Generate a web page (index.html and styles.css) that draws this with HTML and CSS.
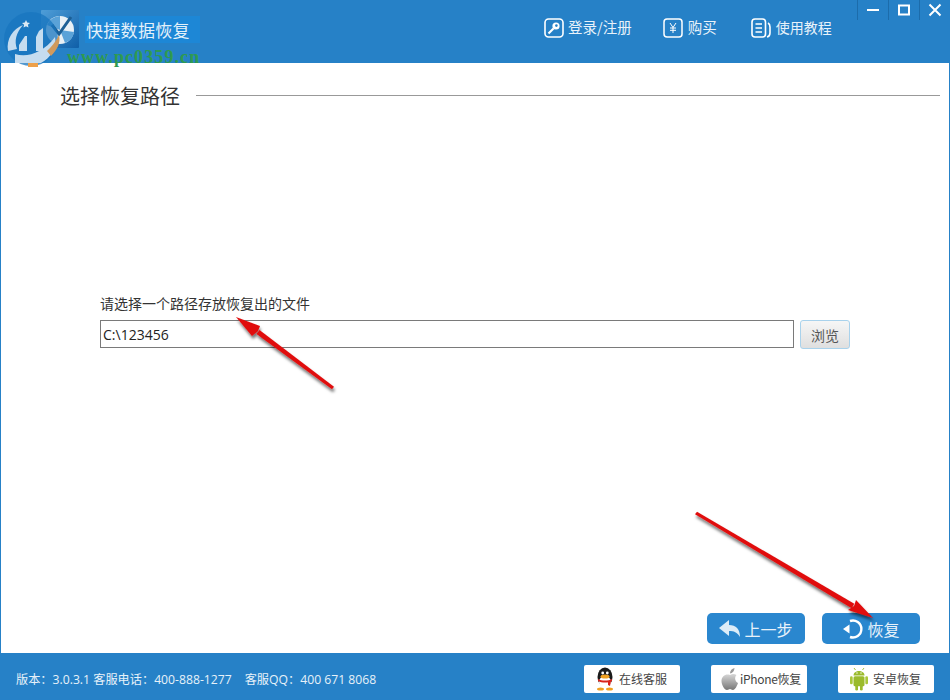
FILE: index.html
```html
<!DOCTYPE html>
<html lang="zh-CN">
<head>
    <meta charset="UTF-8">
    <title>快捷数据恢复</title>
    <link rel="stylesheet" href="styles.css">
</head>
<body>
<div class="app">

    <header class="topbar">
        <div class="brand">
            <svg class="brand-icon" width="38" height="38" viewBox="0 0 38 38">
                <defs>
                    <linearGradient id="brandBg" x1="0" y1="0" x2="1" y2="1">
                        <stop offset="0" stop-color="#4f9ed8"/>
                        <stop offset="1" stop-color="#0f5fa8"/>
                    </linearGradient>
                </defs>
                <rect width="38" height="38" rx="1" fill="url(#brandBg)"/>
                <circle cx="19" cy="20" r="14" fill="#e8f0f6"/>
                <path d="M19 20 L19 6 A14 14 0 0 0 6 15 Z" fill="#5aa2d8"/>
                <path d="M19 20 L33 22 A14 14 0 0 1 24 33 Z" fill="#5aa2d8"/>
                <path d="M11 15 L18 24 L30 7" fill="none" stroke="#1c5f96" stroke-width="3"/>
            </svg>
            <span class="brand-name">快捷数据恢复</span>
        </div>
        <nav class="topnav">
            <a class="topnav-item topnav-login">
                <svg width="20" height="20" viewBox="0 0 20 20">
                    <rect x="1" y="1" width="18" height="18" rx="3.5" fill="none" stroke="#fff" stroke-width="1.6"/>
                    <circle cx="12" cy="8" r="3.6" fill="#fff"/>
                    <circle cx="12.4" cy="7.6" r="1.3" fill="#2681c7"/>
                    <path d="M9.5 10.5 L4.5 15.5" stroke="#fff" stroke-width="2.2"/>
                </svg>
                <span>登录/注册</span>
            </a>
            <a class="topnav-item topnav-buy">
                <svg width="20" height="20" viewBox="0 0 20 20">
                    <rect x="1" y="1" width="18" height="18" rx="3" fill="none" stroke="#fff" stroke-width="1.5"/>
                    <path d="M7 5 L10 9.5 L13 5 M10 9.5 V15 M7 10 H13 M7 12.3 H13" fill="none" stroke="#fff" stroke-width="1"/>
                </svg>
                <span>购买</span>
            </a>
            <a class="topnav-item topnav-help">
                <svg width="20" height="20" viewBox="0 0 20 20">
                    <rect x="1" y="1" width="13.5" height="18" rx="3" fill="none" stroke="#fff" stroke-width="1.6"/>
                    <path d="M4.5 6 H11 M4.5 10 H11 M4.5 14 H11" stroke="#fff" stroke-width="1.3"/>
                    <path d="M17 5 C19 6 19 7 19 9 V15 C19 17 18 18.5 16 19" fill="none" stroke="#fff" stroke-width="1.6"/>
                </svg>
                <span>使用教程</span>
            </a>
        </nav>
        <div class="winctl">
            <div class="winctl-btn">
                <svg width="14" height="14" viewBox="0 0 14 14"><path d="M1 7 H13" stroke="#fff" stroke-width="2"/></svg>
            </div>
            <div class="winctl-btn">
                <svg width="14" height="14" viewBox="0 0 14 14"><rect x="2" y="2.5" width="10" height="9" fill="none" stroke="#fff" stroke-width="2"/></svg>
            </div>
            <div class="winctl-btn">
                <svg width="14" height="14" viewBox="0 0 14 14"><path d="M1.5 1.5 L12.5 12.5 M12.5 1.5 L1.5 12.5" stroke="#fff" stroke-width="2"/></svg>
            </div>
        </div>
    </header>

    <main class="content">
        <div class="section-head">
            <h1>选择恢复路径</h1>
            <div class="section-line"></div>
        </div>

        <div class="path-form">
            <label class="path-label" for="savePath">请选择一个路径存放恢复出的文件</label>
            <div class="path-row">
                <input class="path-input" id="savePath" type="text" value="C:\123456">
                <button class="browse-btn">浏览</button>
            </div>
        </div>

        <div class="actions">
            <button class="action-btn">
                <svg width="22" height="18" viewBox="0 0 22 18"><path d="M0 8 L10 0 V5 C17 5 21 9 21 17 C18 12 15 11 10 11 V16 Z" fill="#dcecf8"/></svg>
                <span>上一步</span>
            </button>
            <button class="action-btn">
                <svg width="22" height="22" viewBox="0 0 22 22">
                    <path d="M8 3 A8.5 8.5 0 1 1 8 19" fill="none" stroke="#fff" stroke-width="2.4"/>
                    <path d="M1 11 L7.5 6.5 L7.5 15.5 Z" fill="#fff"/>
                </svg>
                <span>恢复</span>
            </button>
        </div>
    </main>

    <footer class="bottombar">
        <div class="version">
            <span>版本：3.0.3.1 客服电话：400-888-1277</span>
            <span>客服QQ：400 671 8068</span>
        </div>
        <div class="bottom-links">
            <a class="link-btn">
                <svg width="20" height="24" viewBox="0 0 20 24">
                    <ellipse cx="10" cy="10" rx="7.5" ry="9.5" fill="#1a1a1a"/>
                    <ellipse cx="10" cy="15" rx="6" ry="6" fill="#fff"/>
                    <ellipse cx="10" cy="9.5" rx="4.5" ry="2" fill="#f0a020"/>
                    <circle cx="7.7" cy="6" r="1.4" fill="#fff"/>
                    <circle cx="12.3" cy="6" r="1.4" fill="#fff"/>
                    <path d="M3 12 C7 14 13 14 17 12 L17 14 C13 16 7 16 3 14 Z" fill="#d9231c"/>
                    <path d="M13 14 L16 14 L15 19 L13 18 Z" fill="#d9231c"/>
                    <ellipse cx="5.5" cy="22" rx="3.5" ry="1.6" fill="#f0a020"/>
                    <ellipse cx="14.5" cy="22" rx="3.5" ry="1.6" fill="#f0a020"/>
                </svg>
                <span>在线客服</span>
            </a>
            <a class="link-btn link-iphone">
                <svg width="20" height="24" viewBox="0 0 20 24">
                    <defs>
                        <linearGradient id="appleFill" x1="0" y1="0" x2="0" y2="1">
                            <stop offset="0" stop-color="#d8d8d8"/>
                            <stop offset="1" stop-color="#777"/>
                        </linearGradient>
                    </defs>
                    <path d="M10 8 C12 6.5 14.5 6.5 16.5 8 C14.5 10 14.5 14 18 16 C17 19 15 23 13 23 C11.5 23 11 22 10 22 C9 22 8.5 23 7 23 C4.5 23 1.5 18 1.5 14 C1.5 9 6 6.5 10 8 Z" fill="url(#appleFill)"/>
                    <path d="M10 6.5 C10 3.5 12 1.5 14.5 1 C14.5 4 12.5 6.2 10 6.5 Z" fill="#999"/>
                </svg>
                <span>iPhone恢复</span>
            </a>
            <a class="link-btn">
                <svg width="20" height="24" viewBox="0 0 20 24">
                    <path d="M4.5 8.5 C4.5 2.5 15.5 2.5 15.5 8.5 Z" fill="#9bbb2c"/>
                    <path d="M6.5 3 L5 1 M13.5 3 L15 1" stroke="#9bbb2c" stroke-width="0.9"/>
                    <rect x="4.5" y="9.3" width="11" height="10" rx="1.5" fill="#9bbb2c"/>
                    <rect x="1" y="9.3" width="2.7" height="8" rx="1.3" fill="#a9c63a"/>
                    <rect x="16.3" y="9.3" width="2.7" height="8" rx="1.3" fill="#a9c63a"/>
                    <rect x="6.3" y="18" width="2.7" height="5.5" rx="1.3" fill="#9bbb2c"/>
                    <rect x="11" y="18" width="2.7" height="5.5" rx="1.3" fill="#9bbb2c"/>
                    <circle cx="8" cy="6" r=".7" fill="#fff"/>
                    <circle cx="12" cy="6" r=".7" fill="#fff"/>
                </svg>
                <span>安卓恢复</span>
            </a>
        </div>
    </footer>

    <!-- watermark + red arrows sit on top of the screenshot -->
    <svg class="stamp-logo" width="60" height="56" viewBox="0 0 60 56">
        <circle cx="28" cy="28" r="27" fill="#1876bf" opacity=".75"/>
        <path d="M5 40 C3 28 10 18 20 14 C13 22 11 30 14 38 Z" fill="#c5dcef"/>
        <path d="M16 34 L22 25 L24 25 V40 H16 Z" fill="#c5dcef"/>
        <path d="M36 20 L40 17 V40 H33 V26 Z" fill="#c5dcef"/>
        <path d="M12 43 C24 47 40 42 52 26 C54 36 48 47 38 52 H12 Z" fill="#c5dcef"/>
        <path d="M44 40 C48 36 52 32 56 24 C58 32 54 39 48 45 Z" fill="#d09a5c"/>
        <rect x="25" y="52" width="10" height="4" fill="#eda04a"/>
        <path d="M23 9 l1.2 2.6 2.8 .3 -2.1 1.9 .6 2.8 -2.5 -1.4 -2.5 1.4 .6 -2.8 -2.1 -1.9 2.8 -.3z" fill="#dce9f4"/>
    </svg>
    <div class="stamp-url">www.pc0359.cn</div>

    <svg class="arrows" width="950" height="700" viewBox="0 0 950 700">
        <defs>
            <filter id="arrowShadow" x="-20%" y="-20%" width="140%" height="140%">
                <feDropShadow dx="1" dy="3" stdDeviation="1.8" flood-color="#000" flood-opacity=".55"/>
            </filter>
        </defs>
        <g filter="url(#arrowShadow)" fill="#e01010">
            <path d="M332 389.2 L334 386.8 L259.5 330 L256.5 334 Z"/>
            <path d="M236 317 L260 326 L258 331 L252 336 Z"/>
            <path d="M695 514.3 L697 511.7 L854.3 603.8 L851.7 608.2 Z"/>
            <path d="M873 618 L848 610 L854 606 L856 600 Z"/>
        </g>
    </svg>
</div>
</body>
</html>
```

FILE: styles.css
```css
html, body {
    margin: 0;
    padding: 0;
}
body {
    font-family: "Noto Sans CJK SC", "Open Sans", sans-serif;
    background: #fff;
    overflow: hidden;
}
svg {
    display: block;
    flex-shrink: 0;
}
.app {
    position: relative;
    display: flex;
    flex-direction: column;
    width: 950px;
    height: 700px;
    overflow: hidden;
}

/* top bar */
.topbar {
    display: flex;
    align-items: flex-start;
    height: 63px;
    background: #2681c7;
    color: #fff;
}
.brand {
    display: flex;
    align-items: center;
    width: 200px;
    height: 38px;
    margin-top: 10px;
    padding-left: 41px;
    box-sizing: border-box;
}
.brand-name {
    width: 115px;
    height: 27px;
    line-height: 27px;
    margin-left: 6px;
    font-size: 17px;
    letter-spacing: .3px;
    text-indent: 1px;
    background: #1d87d6;
    color: #e4f1fa;
}
.topnav {
    display: flex;
    align-items: center;
    height: 20px;
    margin-top: 18px;
    margin-left: 344px;
}
.topnav-item {
    display: flex;
    align-items: center;
    gap: 4px;
    font-size: 14.5px;
    color: #e8f2fa;
}
.topnav-item span {
    margin-bottom: 3px;
}
.topnav-buy {
    margin-left: 31px;
    gap: 5px;
}
.topnav-help {
    margin-left: 34px;
    gap: 5px;
    font-size: 14px;
}
.winctl {
    display: flex;
    margin-left: auto;
}
.winctl-btn {
    display: flex;
    justify-content: center;
    width: 31px;
    height: 20px;
    padding-top: 3px;
    box-sizing: border-box;
    border-left: 1px solid #1c6cab;
}

/* white content area */
.content {
    flex: 1;
    display: flex;
    flex-direction: column;
    border-left: 1px solid #2681c7;
    border-right: 1px solid #2681c7;
    min-height: 0;
}
.section-head {
    display: flex;
    align-items: center;
    height: 28px;
    margin-top: 19px;
    padding-left: 59px;
    padding-right: 9px;
}
.section-head h1 {
    margin: 0;
    font-size: 20px;
    font-weight: 400;
    line-height: 28px;
    color: #333;
}
.section-line {
    flex: 1;
    height: 1px;
    margin-left: 16px;
    margin-top: -2px;
    background: #999;
}
.path-form {
    margin-top: 184px;
    padding-left: 99px;
    padding-right: 99px;
}
.path-label {
    display: block;
    height: 18px;
    line-height: 18px;
    font-size: 14px;
    color: #333;
}
.path-row {
    display: flex;
    gap: 6px;
    margin-top: 8px;
}
.path-input {
    flex: 1;
    height: 28px;
    box-sizing: border-box;
    padding: 0 2px;
    border: 1px solid #7a7a7a;
    font-family: "Open Sans", sans-serif;
    font-size: 14px;
    color: #222;
    outline: none;
}
.browse-btn {
    width: 50px;
    height: 29px;
    padding: 0;
    border: 1px solid #a9d2ec;
    border-radius: 3px;
    background: linear-gradient(#f6f6f6, #dfdfdf);
    font-family: inherit;
    font-size: 14px;
    color: #555;
}
.actions {
    display: flex;
    justify-content: flex-end;
    gap: 17px;
    margin-top: auto;
    margin-bottom: 9px;
    padding-right: 29px;
}
.action-btn {
    display: flex;
    align-items: center;
    justify-content: center;
    gap: 3px;
    width: 98px;
    height: 31px;
    padding: 0;
    border: none;
    border-radius: 5px;
    background: #2a87cf;
    font-family: inherit;
    font-size: 16px;
    color: #e8f2fa;
}

/* bottom bar */
.bottombar {
    display: flex;
    align-items: center;
    justify-content: space-between;
    height: 47px;
    padding: 0 16px;
    box-sizing: border-box;
    background: #2681c7;
}
.version {
    display: flex;
    gap: 13px;
    margin-top: 4px;
    font-size: 12.2px;
    color: #e6f1f9;
    font-family: "Open Sans", "Noto Sans CJK SC", sans-serif;
}
.bottom-links {
    display: flex;
    gap: 31px;
    margin-top: 4px;
}
.link-btn {
    display: flex;
    align-items: center;
    gap: 4px;
    width: 96px;
    height: 28px;
    padding-left: 11px;
    box-sizing: border-box;
    border-radius: 2px;
    background: #fff;
    font-size: 12px;
    color: #444;
}
.link-iphone {
    gap: 0;
    padding-left: 9px;
    letter-spacing: -.3px;
}

/* overlays */
.stamp-logo {
    position: absolute;
    left: 3px;
    top: 11px;
}
.stamp-url {
    position: absolute;
    left: 67px;
    top: 47px;
    font-family: "Liberation Serif", serif;
    font-size: 18px;
    font-weight: 700;
    letter-spacing: 1.1px;
    line-height: 20px;
    color: #2f9a50;
}
.arrows {
    position: absolute;
    left: 0;
    top: 0;
    pointer-events: none;
}
```
